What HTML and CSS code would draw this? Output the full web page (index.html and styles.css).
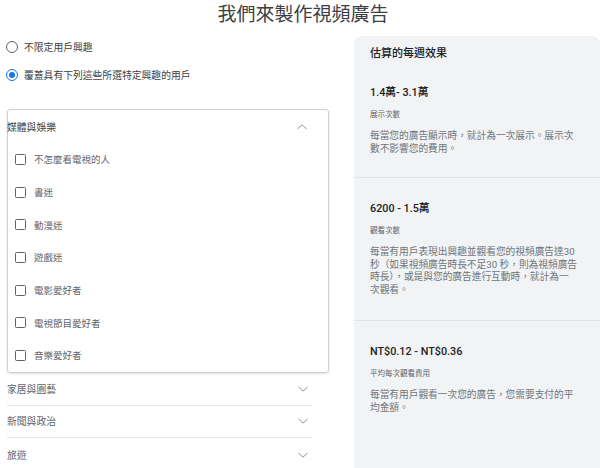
FILE: index.html
```html
<!DOCTYPE html>
<html lang="zh-Hant">
<head>
<meta charset="utf-8">
<title>我們來製作視頻廣告</title>
<link rel="stylesheet" href="styles.css">
</head>
<body>
<div class="page">
  <h1 class="title">我們來製作視頻廣告</h1>
  <div class="main">
    <div class="left">
      <div class="radio-row"><span class="radio"></span><span class="radio-label">不限定用戶興趣</span></div>
      <div class="radio-row"><span class="radio checked"></span><span class="radio-label">覆蓋具有下列這些所選特定興趣的用戶</span></div>

      <div class="panel">
        <div class="panel-head">
          <span class="cat-label">媒體與娛樂</span>
          <svg class="chev" width="10" height="6" viewBox="0 0 10 6"><polyline points="0.5,5 5,0.8 9.5,5" fill="none" stroke="#80868b" stroke-width="0.9"/></svg>
        </div>
        <div class="item"><span class="check"></span><span class="item-label">不怎麼看電視的人</span></div>
        <div class="item"><span class="check"></span><span class="item-label">書迷</span></div>
        <div class="item"><span class="check"></span><span class="item-label">動漫迷</span></div>
        <div class="item"><span class="check"></span><span class="item-label">遊戲迷</span></div>
        <div class="item"><span class="check"></span><span class="item-label">電影愛好者</span></div>
        <div class="item"><span class="check"></span><span class="item-label">電視節目愛好者</span></div>
        <div class="item"><span class="check"></span><span class="item-label">音樂愛好者</span></div>
      </div>

      <div class="cat-row">
        <span class="cat-label">家居與園藝</span>
        <svg class="chev" width="10" height="6" viewBox="0 0 10 6"><polyline points="0.5,1 5,5.2 9.5,1" fill="none" stroke="#80868b" stroke-width="0.9"/></svg>
      </div>
      <div class="cat-row">
        <span class="cat-label">新聞與政治</span>
        <svg class="chev" width="10" height="6" viewBox="0 0 10 6"><polyline points="0.5,1 5,5.2 9.5,1" fill="none" stroke="#80868b" stroke-width="0.9"/></svg>
      </div>
      <div class="cat-row last">
        <span class="cat-label">旅遊</span>
        <svg class="chev" width="10" height="6" viewBox="0 0 10 6"><polyline points="0.5,1 5,5.2 9.5,1" fill="none" stroke="#80868b" stroke-width="0.9"/></svg>
      </div>
    </div>

    <aside class="card">
      <div class="card-head">估算的每週效果</div>
      <section class="metric first">
        <div class="value">1.4萬- 3.1萬</div>
        <div class="label">展示次數</div>
        <p class="desc">每當您的廣告顯示時，就計為一次展示。展示次<br>數不影響您的費用。</p>
      </section>
      <section class="metric">
        <div class="value">6200 - 1.5萬</div>
        <div class="label">觀看次數</div>
        <p class="desc">每當有用戶表現出興趣並觀看您的視頻廣告達30<br>秒（如果視頻廣告時長不足30 秒，則為視頻廣告<br>時長），或是與您的廣告進行互動時，就計為一<br>次觀看。</p>
      </section>
      <section class="metric last">
        <div class="value">NT$0.12 - NT$0.36</div>
        <div class="label">平均每次觀看費用</div>
        <p class="desc">每當有用戶觀看一次您的廣告，您需要支付的平<br>均金額。</p>
      </section>
    </aside>
  </div>
</div>
</body>
</html>
```

FILE: styles.css
```css
html, body {
  margin: 0;
  padding: 0;
  background: #ffffff;
  overflow: hidden;
}

body {
  font-family: "Roboto", "Noto Sans CJK TC", sans-serif;
  color: #3c4043;
}

.page {
  width: 600px;
  height: 468px;
  overflow: hidden;
}

.title {
  margin: 0;
  height: 36px;
  padding-top: 3px;
  padding-left: 6px;
  box-sizing: border-box;
  text-align: center;
  font-size: 19px;
  line-height: 24px;
  font-weight: 400;
  color: #3c4043;
}

.main {
  display: grid;
  grid-template-columns: 330px 246px;
  column-gap: 24px;
  align-items: start;
}

/* left column */
.left {
  display: flex;
  flex-direction: column;
}

.radio-row {
  display: flex;
  align-items: center;
  height: 22px;
  padding-left: 6px;
  gap: 6px;
}

.radio-row + .radio-row {
  margin-top: 6px;
}

.radio {
  width: 12px;
  height: 12px;
  box-sizing: border-box;
  border: 1.5px solid #5f6368;
  border-radius: 50%;
  display: flex;
  align-items: center;
  justify-content: center;
}

.radio.checked {
  border-color: #1a73e8;
}

.radio.checked::after {
  content: "";
  width: 6px;
  height: 6px;
  border-radius: 50%;
  background: #1a73e8;
}

.radio-label {
  font-size: 9.8px;
  color: #3c4043;
}

.panel {
  margin-top: 23px;
  margin-left: 7px;
  width: 322px;
  box-sizing: border-box;
  border: 1px solid #cfcfcf;
  border-radius: 3px;
  box-shadow: 0 1px 2px rgba(0, 0, 0, 0.12);
  display: flex;
  flex-direction: column;
}

.panel-head {
  height: 33px;
  display: flex;
  align-items: center;
  justify-content: space-between;
  padding-right: 21px;
}

.panel-head .cat-label {
  margin-left: -1px;
}

.cat-label {
  font-size: 9.8px;
  color: #3c4043;
}

.chev {
  display: block;
}

.item {
  height: 32.7px;
  display: flex;
  align-items: center;
  padding-left: 7px;
  gap: 8px;
}

.check {
  width: 11px;
  height: 11px;
  box-sizing: border-box;
  border: 1.5px solid #5f6368;
  border-radius: 1.5px;
}

.item-label {
  font-size: 9.5px;
  color: #5f6368;
}

.cat-row {
  margin-left: 7px;
  width: 305px;
  height: 32.7px;
  box-sizing: border-box;
  display: flex;
  align-items: center;
  justify-content: space-between;
  padding-right: 4px;
  border-bottom: 1px solid #e6e6e6;
}

.cat-row.last {
  border-bottom: none;
}

.cat-row .cat-label {
  color: #5f6368;
}

/* right card */
.card {
  background: #f1f3f4;
  border-radius: 8px 8px 0 0;
  height: 440px;
  display: flex;
  flex-direction: column;
}

.card-head {
  padding: 11px 16px 0;
  font-size: 11px;
  line-height: 14px;
  font-weight: 500;
  color: #202124;
}

.metric {
  padding: 24px 16px;
  border-bottom: 1px solid #e2e3e5;
}

.metric.first {
  padding-top: 25px;
  padding-bottom: 22px;
}

.metric.last {
  border-bottom: none;
}

.value {
  font-size: 10.8px;
  line-height: 14px;
  font-weight: 500;
  color: #202124;
}

.label {
  margin-top: 10px;
  font-size: 7.5px;
  line-height: 10px;
  color: #5f6368;
}

.desc {
  margin: 10px 0 0;
  font-size: 9.7px;
  line-height: 12.5px;
  color: #70757a;
  white-space: nowrap;
}
```
